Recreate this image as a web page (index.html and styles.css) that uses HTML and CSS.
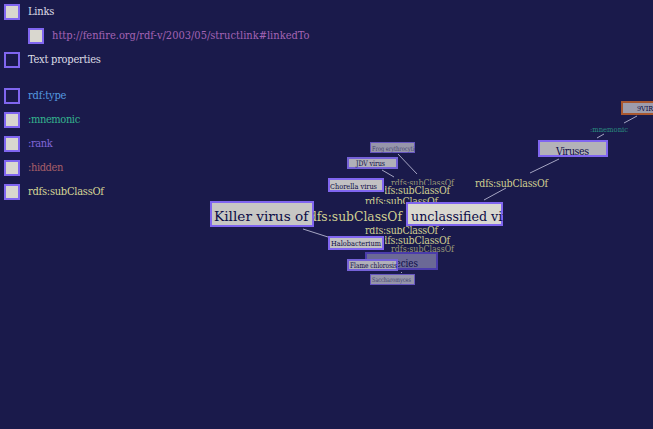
FILE: index.html
```html
<!DOCTYPE html>
<html lang="en">
<head>
<meta charset="utf-8">
<title>Fenfire</title>
<link rel="stylesheet" href="styles.css">
</head>
<body>
<ul class="legend">
  <li class="row"><i class="box on"></i><span class="links">Links</span></li>
  <li class="row nested"><i class="box on"></i><span class="url">http://fenfire.org/rdf-v/2003/05/structlink#linkedTo</span></li>
  <li class="row section"><i class="box"></i><span class="props">Text properties</span></li>
  <li class="row"><i class="box"></i><span class="type">rdf:type</span></li>
  <li class="row"><i class="box on"></i><span class="mnemonic">:mnemonic</span></li>
  <li class="row"><i class="box on"></i><span class="rank">:rank</span></li>
  <li class="row"><i class="box on"></i><span class="hidden">:hidden</span></li>
  <li class="row"><i class="box on"></i><span class="subclass">rdfs:subClassOf</span></li>
</ul>
<svg class="graph" width="653" height="429" viewBox="0 0 653 429">
  <defs>
    <clipPath id="c-killer"><rect x="210" y="201" width="104" height="26"/></clipPath>
    <clipPath id="c-uncl"><rect x="406" y="202" width="97" height="24"/></clipPath>
    <clipPath id="c-frog"><rect x="370" y="142" width="45" height="11"/></clipPath>
    <clipPath id="c-flame"><rect x="347" y="259" width="51" height="12"/></clipPath>
    <clipPath id="c-right"><rect x="385" y="170" width="80" height="90"/></clipPath>
    <clipPath id="c-center"><rect x="314" y="204" width="92" height="22"/></clipPath>
  </defs>
  <path class="edge" d="M303 229L328 237M382 170L394 177M398 154L417 174M484 200L506 188M530 173L559 159M597 138L604 134M624 123L637 116M442 230L444 228M401 272L402 273"/>

  <rect class="node small" x="370.5" y="142.5" width="44" height="10"/>
  <text class="faint" clip-path="url(#c-frog)" x="372" y="151" font-size="6.5" textLength="45" lengthAdjust="spacingAndGlyphs">Frog erythrocytic</text>
  <rect class="node small" x="370.5" y="274.5" width="44" height="10"/>
  <text class="faint" x="372" y="282" font-size="6.5" textLength="39" lengthAdjust="spacingAndGlyphs">Saccharomyces</text>

  <rect class="node species" x="366" y="253" width="71" height="16"/>
  <text class="ink" x="384" y="267" font-size="10.5" textLength="34" lengthAdjust="spacingAndGlyphs">Species</text>
  <text class="sub dim" x="391" y="186" font-size="9.5" textLength="63" lengthAdjust="spacingAndGlyphs">rdfs:subClassOf</text>
  <text class="sub dim" x="391" y="251.5" font-size="9.5" textLength="63" lengthAdjust="spacingAndGlyphs">rdfs:subClassOf</text>
  <rect class="backing" x="378" y="185" width="70" height="10"/>
  <text class="sub" clip-path="url(#c-right)" x="377" y="193.5" font-size="10.5" textLength="73">rdfs:subClassOf</text>
  <rect class="backing" x="378" y="236" width="76" height="9"/>
  <text class="sub" clip-path="url(#c-right)" x="377" y="244" font-size="10.5" textLength="73">rdfs:subClassOf</text>
  <rect class="backing" x="365" y="196" width="73" height="8"/>
  <text class="sub" x="365" y="205" font-size="10.5" textLength="73">rdfs:subClassOf</text>
  <rect class="backing" x="365" y="226" width="73" height="9"/>
  <text class="sub" x="365" y="234" font-size="10.5" textLength="73">rdfs:subClassOf</text>
  <rect class="backing" x="314" y="204" width="92" height="23"/>
  <text class="sub" clip-path="url(#c-center)" x="303" y="220.5" font-size="13.5" textLength="99" lengthAdjust="spacingAndGlyphs">rdfs:subClassOf</text>

  <rect class="node gray" x="348" y="158" width="49" height="10"/>
  <text class="ink" x="356" y="166" font-size="7.5" textLength="29" lengthAdjust="spacingAndGlyphs">JDV virus</text>
  <rect class="node gray" x="348" y="260" width="49" height="10"/>
  <text class="ink" clip-path="url(#c-flame)" x="350" y="268" font-size="7.5" textLength="47" lengthAdjust="spacingAndGlyphs">Flame chlorosis</text>
  <rect class="node mid" x="329" y="179" width="54" height="12"/>
  <text class="ink" x="330" y="189" font-size="8" textLength="47" lengthAdjust="spacingAndGlyphs">Chorella virus</text>
  <rect class="node mid" x="329" y="237" width="54" height="12"/>
  <text class="ink" x="331" y="246" font-size="8" textLength="50" lengthAdjust="spacingAndGlyphs">Halobacterium</text>

  <rect class="node killer" x="211" y="202" width="102" height="24"/>
  <text class="ink" clip-path="url(#c-killer)" x="214" y="221" font-size="13.5" textLength="108" lengthAdjust="spacingAndGlyphs">Killer virus of S</text>
  <rect class="node focus" x="407" y="203" width="95" height="22"/>
  <text class="ink" clip-path="url(#c-uncl)" x="411" y="221" font-size="13.5" textLength="112" lengthAdjust="spacingAndGlyphs">unclassified virus</text>

  <text class="sub" x="475" y="186.5" font-size="10.5" textLength="73">rdfs:subClassOf</text>
  <rect class="node viruses" x="539" y="141" width="68" height="15"/>
  <text class="ink" x="556" y="154.5" font-size="10.5" textLength="33">Viruses</text>
  <text class="mnemonic-edge" x="590" y="132" font-size="8" textLength="38" lengthAdjust="spacingAndGlyphs">:mnemonic</text>
  <rect class="node literal" x="622" y="102" width="60" height="12"/>
  <text class="ink" x="637" y="111" font-size="8" textLength="26" lengthAdjust="spacingAndGlyphs">9VIRUS</text>
</svg>
</body>
</html>
```
FILE: styles.css
```css
body {
  margin: 0;
  height: 429px;
  overflow: hidden;
  background: #1a1a4b;
  font-family: "DejaVu Serif Condensed", "DejaVu Serif", serif;
  font-stretch: condensed;
}
.legend {
  margin: 0;
  padding: 4px;
  display: flex;
  flex-direction: column;
  gap: 8px;
  list-style: none;
}
.row {
  display: flex;
  align-items: center;
  gap: 8px;
  height: 16px;
  font-size: 11px;
  line-height: 16px;
  white-space: nowrap;
}
.nested { margin-left: 24px; }
.section { margin-bottom: 12px; }
.box {
  box-sizing: border-box;
  width: 16px;
  height: 16px;
  border: 2px solid #8066f0;
}
.on { background: #d9d7cf; }
.links, .props { color: #dedee6; }
.links { letter-spacing: -0.2px; }
.props { letter-spacing: -0.25px; }
.url { color: #a464b4; }
.type { color: #559be0; letter-spacing: -0.2px; }
.mnemonic { color: #35b48e; letter-spacing: -0.4px; }
.rank { color: #8066d8; letter-spacing: -0.4px; }
.hidden { color: #a85f68; letter-spacing: -0.4px; }
.subclass { color: #d6d696; letter-spacing: -0.25px; }

.graph {
  position: absolute;
  left: 0;
  top: 0;
  font-stretch: condensed;
}
.edge { stroke: #a5a5c3; stroke-width: 1; fill: none; }
.node { stroke: #8066f0; stroke-width: 2; }
.small { fill: #9695aa; stroke: #6656bf; stroke-width: 1; }
.gray { fill: #b1b0b9; stroke: #7562d8; }
.mid { fill: #c2c1c3; }
.species { fill: #6b6996; stroke: #4b3cac; }
.killer { fill: #c7c7c4; }
.focus { fill: #d9d8d0; }
.viruses { fill: #b3b2b8; }
.literal { fill: #9d9cac; stroke: #a9572f; }
.backing { fill: #1a1a4b; }
.ink { fill: #0c0c46; }
.faint { fill: #42426e; }
.sub { fill: #cfcf91; }
.dim { fill: #9b9b79; }
.mnemonic-edge { fill: #2b8e80; }
```
